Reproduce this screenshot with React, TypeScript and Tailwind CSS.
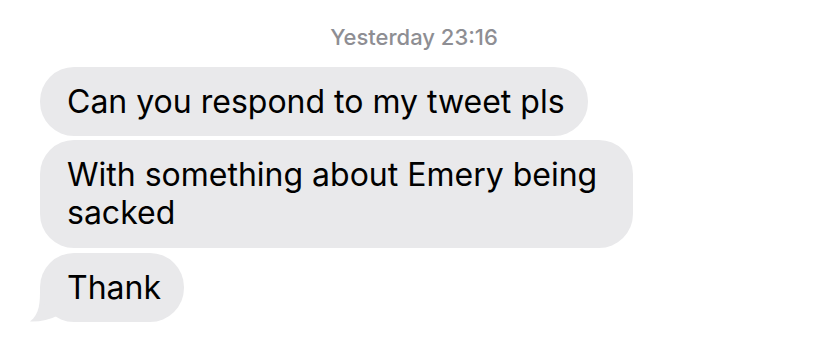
import React from 'react';

const messages = ['Can you respond to my tweet pls', 'With something about Emery being sacked', 'Thank'];

const Bubble: React.FC<{ text: string; tail?: boolean; wide?: boolean }> = ({ text, tail, wide }) => (
    <div className={`relative ${tail ? 'mt-[1px]' : ''}`}>
        {tail && (
            <svg className="absolute left-[-11px] bottom-0 w-[40px] h-[34px]" viewBox="0 0 40 34">
                <path d="M11 0 C11 14 11 26 1 33.5 C10 34 20 32 30 27 L30 0 Z" fill="#e9e9eb" />
            </svg>
        )}
        <div
            className={`relative inline-block bg-[#e9e9eb] rounded-[34px] pl-[27px] pr-[23px] text-black text-[32px] leading-[38px] ${wide ? 'w-[593px] py-[16px]' : 'py-[15.5px]'}`}
        >
            {text}
        </div>
    </div>
);

export default function App() {
    return (
        <div className="w-[828px] h-[344px] bg-white overflow-hidden" style={{ fontFamily: 'Inter, "Liberation Sans", Arial, sans-serif' }}>
            <div className="pt-[24px] text-center text-[22px] leading-[26px] text-[#8e8e93] font-medium">
                Yesterday 23:16
            </div>
            <div className="flex flex-col items-start gap-[4px] pl-[40px] mt-[17px]">
                <Bubble text={messages[0]} />
                <Bubble text={messages[1]} wide />
                <Bubble text={messages[2]} tail />
            </div>
        </div>
    );
}
